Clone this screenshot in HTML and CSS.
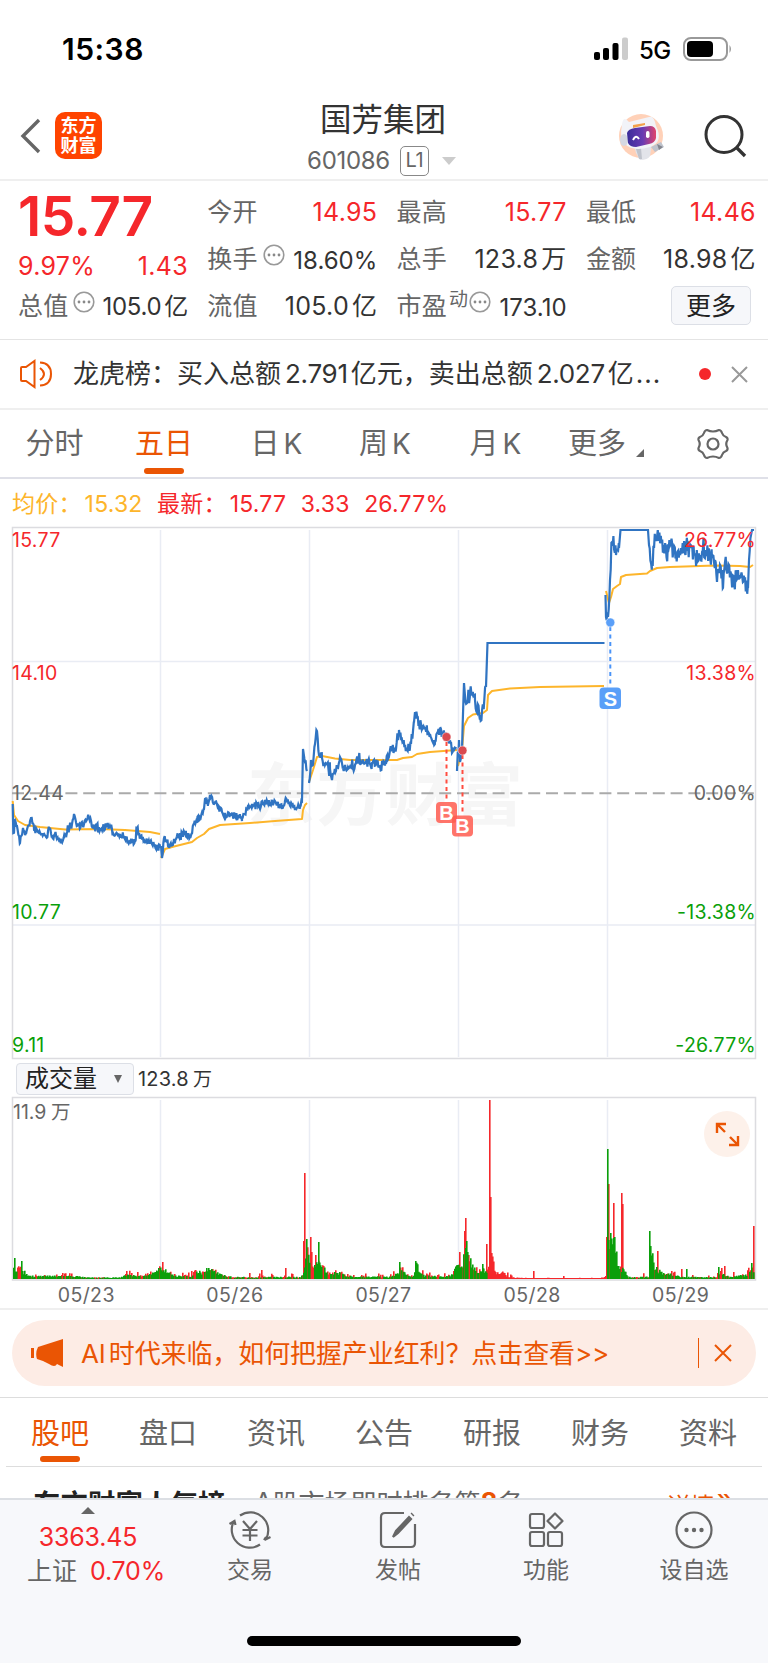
FILE: index.html
```
<!DOCTYPE html>
<html lang="zh-CN">
<head>
<meta charset="UTF-8">
<meta name="viewport" content="initial-scale=1, width=device-width">
<title>国芳集团 601086</title>
<link rel="stylesheet" href="styles.css">
</head>
<body>
<div class="statusbar">
	<span class="clock">15:38</span>
	<svg class="signal" width="34" height="24" viewBox="0 0 34 24">
		<rect x="0" y="15" width="6" height="8" rx="2"/><rect x="9" y="11" width="6" height="12" rx="2"/>
		<rect x="18.500" y="6" width="6" height="17" rx="2"/><rect x="28" y="0.500" width="6" height="22.500" rx="2" fill="#ccc"/>
	</svg>
	<span class="net">5G</span>
	<svg width="50" height="24" viewBox="0 0 50 24">
		<rect x="1" y="1" width="43" height="22" rx="7" fill="none" stroke="#999" stroke-width="2"/>
		<rect x="4" y="4" width="26" height="16" rx="4"/><path d="M46.500 8q3 4 0 8z" fill="#999"/>
	</svg>
</div>

<header>
	<svg class="back" width="22" height="36" viewBox="0 0 22 36"><path d="M19 2L3 18L19 34" fill="none" stroke="#666" stroke-width="3.400"/></svg>
	<div class="logo"><span>东方</span><span>财富</span></div>
	<div class="stock">
		<h1>国芳集团</h1>
		<p>601086<b>L1</b><i></i></p>
	</div>
	<svg class="robot" width="46" height="48" viewBox="0 0 46 48">
		<circle cx="22" cy="23" r="22" fill="#ffd1b8"/>
		<path d="M15 32L33 30L31 43Q29 47 21 47L17 40z" fill="#e2e4ea"/>
		<path d="M17 36l5-1 1 11-3 0zM32 34l10-5 3 5-9 5z" fill="#bfc3cc"/><path d="M38 31l6 3-4 3z" fill="#83868f"/>
		<path d="M3 12Q4 2 10 9L30 4Q35 2 37 13Q45 29 31 34Q14 39 6 31Q0 25 3 12z" fill="#f2f3f8"/>
		<ellipse cx="5" cy="27" rx="4" ry="6" fill="#d5d8e2"/>
		<path d="M14 12l12-2v2l-12 3z" fill="#f2a04b"/>
		<path d="M8 20Q9 16 16 15L31 13Q36 13 37 18L37 25Q36 30 30 31L17 34Q11 34 9 30z" fill="url(#face)"/>
		<path d="M14 27q3-6 6-1" fill="none" stroke="#fff" stroke-width="2"/><rect x="27" y="18" width="3.500" height="7" rx="1.700" fill="#fff"/>
		<defs><linearGradient id="face"><stop offset="0" stop-color="#3a2c99"/><stop offset=".55" stop-color="#6a3bb3"/><stop offset="1" stop-color="#e0446c"/></linearGradient></defs>
	</svg>
	<svg class="search" width="44" height="44" viewBox="0 0 44 44"><circle cx="20" cy="20.500" r="18" fill="none" stroke="#333" stroke-width="3"/><path d="M32 33L41 42" stroke="#333" stroke-width="3.400"/></svg>
</header>

<section class="quote">
	<div class="col main">
		<div class="price">15.77</div>
		<div class="row red chg"><span>9.97%</span><span>1.43</span></div>
		<div class="row"><label>总值</label><svg class="tip"><use href="#tip"/></svg><span>105.0<em>亿</em></span></div>
	</div>
	<div class="col">
		<div class="row red"><label>今开</label><span>14.95</span></div>
		<div class="row"><label>换手</label><svg class="tip"><use href="#tip"/></svg><span class="low">18.60%</span></div>
		<div class="row"><label>流值</label><span class="wide">105.0<em>亿</em></span></div>
	</div>
	<div class="col">
		<div class="row red"><label>最高</label><span>15.77</span></div>
		<div class="row"><label>总手</label><span class="wide">123.8<em>万</em></span></div>
		<div class="row"><label>市盈<sup>动</sup></label><svg class="tip pe"><use href="#tip"/></svg><span class="low">173.10</span></div>
	</div>
	<div class="col">
		<div class="row red"><label>最低</label><span>14.46</span></div>
		<div class="row"><label>金额</label><span class="wide">18.98<em>亿</em></span></div>
		<div class="row"><button class="more">更多</button></div>
	</div>
</section>

<section class="notice">
	<svg width="34" height="30" viewBox="0 0 34 30" fill="none" stroke="#ea5504" stroke-width="2"><path d="M2 9Q2 8 3 8H7L15.500 2V28L7 22H3Q2 22 2 21zM21 9Q29 15 21 21M21 3.500Q32 4 32 15Q32 26 21 26.500"/></svg>
	<p>龙虎榜：买入总额<s>2.791</s>亿元，卖出总额<s>2.027</s>亿<s class="dots">...</s></p>
	<i class="dot"></i>
	<svg width="17" height="17" viewBox="0 0 17 17"><path d="M1 1L16 16M16 1L1 16" stroke="#999" stroke-width="2"/></svg>
</section>

<nav class="periods">
	<a>分时</a><a class="on">五日</a><a>日<s>K</s></a><a>周<s>K</s></a><a>月<s>K</s></a><a class="sub">更多<i></i></a>
	<a><svg width="34" height="32" viewBox="0 0 34 32" fill="none" stroke="#666" stroke-width="2.200" stroke-linejoin="round"><path d="M11 2Q17 5 23 2Q25 2 26 5Q27 8 30 9Q32 10 31.500 12Q29 16 31.500 20Q32 22 30 23Q27 24 26 27Q25 30 23 30Q17 27 11 30Q9 30 8 27Q7 24 4 23Q2 22 2.500 20Q5 16 2.500 12Q2 10 4 9Q7 8 8 5Q9 2 11 2z"/><circle cx="17" cy="16" r="5.500"/></svg></a>
</nav>

<p class="legend"><span class="avg">均价：<s>15.32</s></span><span>最新：<s>15.77</s></span><span>3.33</span><span>26.77%</span></p>

<svg class="chart" id="id_price" width="768" height="535" viewBox="0 526 768 535">
	<text class="mark" x="247" y="820" textLength="276">东方财富</text>
	<path class="grid" d="M160.500 530V1057M309.500 530V1057M458.500 530V1057M607.500 530V1057M13 661.500H755M13 925H755"/>
	<path class="frame" d="M12.500 1058.500V527.500H755.500V1058.500z"/>
	<path d="M12 793.300H755" stroke="#aaa" stroke-width="2" stroke-dasharray="12 5.800"/>
	<g id="id_avg"></g><g id="id_line"></g>
	<g class="lbl red"><text x="12" y="547">15.77</text><text x="12" y="679.500">14.10</text><text class="r" x="756" y="547">26.77%</text><text class="r" x="756" y="679.500">13.38%</text></g>
	<g class="lbl gray"><text x="12" y="799.500">12.44</text><text class="r" x="756" y="799.500">0.00%</text></g>
	<g class="lbl green"><text x="12" y="919">10.77</text><text x="12" y="1051.500">9.11</text><text class="r" x="756" y="919">-13.38%</text><text class="r" x="756" y="1051.500">-26.77%</text></g>
	<g class="trade buy">
		<path d="M446.500 742V802M462.500 755V815"/><circle cx="446.500" cy="737" r="4.500"/><circle cx="462.500" cy="750.500" r="4.500"/>
		<rect x="436" y="802" width="21" height="21" rx="4"/><text x="446.500" y="819.500">B</text>
		<rect x="452" y="815.500" width="21" height="21" rx="4"/><text x="462.500" y="833">B</text>
	</g>
	<g class="trade sell"><path d="M610.300 627V687"/><circle cx="610.300" cy="622.500" r="4.500"/><rect x="599.500" y="687.500" width="21.500" height="21.500" rx="4"/><text x="610.300" y="705.500">S</text></g>
</svg>

<div class="volhead"><button><span>成交量</span><i></i></button><span>123.8<em>万</em></span></div>

<div class="volume">
	<svg class="chart" width="768" height="185" viewBox="0 1096 768 185">
		<path class="grid" d="M160.500 1100V1279M309.500 1100V1279M458.500 1100V1279M607.500 1100V1279"/>
		<path class="frame" d="M12.500 1280V1097.500H755.500V1280z"/>
		<path id="id_up" fill="#f5272b"/><path id="id_down" fill="#0a9f0a"/>
		<text class="cap" x="13" y="1119">11.9</text><text class="cap" x="51" y="1119">万</text>
	</svg>
	<svg class="expand" width="46" height="46" viewBox="0 0 46 46"><circle cx="23" cy="23" r="23" fill="#fdf1ea"/><path d="M13 22V13H22M13.500 13.500L21 21M34 25V34H25M33.500 33.500L26 26" fill="none" stroke="#ea5504" stroke-width="2.400"/></svg>
	<div class="dates"><span>05/23</span><span>05/26</span><span>05/27</span><span>05/28</span><span>05/29</span></div>
</div>

<section class="promo">
	<div>
		<svg width="32" height="28" viewBox="0 0 32 28" fill="#ea5504"><path d="M0 9h3v10H0zM7 8L32 0V28L26 25Q24 29 18 25L12 22L6 20Q4 14 7 8z"/></svg>
		<p><s>AI</s>时代来临，如何把握产业红利？点击查看&gt;&gt;</p>
		<i></i>
		<svg width="18" height="18" viewBox="0 0 18 18"><path d="M1 1L17 17M17 1L1 17" stroke="#ea5504" stroke-width="2"/></svg>
	</div>
</section>

<nav class="tabs"><a class="on">股吧</a><a>盘口</a><a>资讯</a><a>公告</a><a>研报</a><a>财务</a><a>资料</a></nav>
<div class="rank"><b>东方财富人气榜</b><span><s>A</s>股市场即时排名第<strong>8</strong>名</span><a>详情<s>»</s></a></div>

<footer>
	<div class="bar">
		<div class="index"><i></i><b>3363.45</b><p>上证<b>0.70%</b></p></div>
		<div><svg width="44" height="40" viewBox="0 0 44 40"><path d="M12 5.500A18 18 0 0 1 38 29M32 34.500A18 18 0 0 1 6 11M1.500 14L6.500 11L7.500 15M36 30L38 27M36.500 30L42.500 27"/><path d="M15 11L22 19L29 11M22 19V31M14.500 20H29.500M14.500 25.500H29.500"/></svg><span>交易</span></div>
		<div><svg width="40" height="40" viewBox="0 0 40 40"><path d="M26 3H7Q3 3 3 7V33Q3 37 7 37H33Q37 37 37 33V14"/><path d="M15 27L18 21L31 7L33 9L20 23z" fill="#666"/><path d="M34 5L35 4" stroke-width="4"/></svg><span>发帖</span></div>
		<div><svg width="40" height="40" viewBox="0 0 40 40"><rect x="4" y="4" width="14" height="14" rx="2"/><rect x="4" y="22" width="14" height="14" rx="2"/><rect x="22" y="22" width="14" height="14" rx="2"/><path d="M29 3.500L36.500 11L29 18.500L21.500 11z" stroke-linejoin="round"/></svg><span>功能</span></div>
		<div><svg width="40" height="40" viewBox="0 0 40 40"><circle cx="20" cy="20" r="17.500"/><g fill="#666" stroke="none"><circle cx="12.500" cy="20" r="2.200"/><circle cx="20" cy="20" r="2.200"/><circle cx="27.500" cy="20" r="2.200"/></g></svg><span>设自选</span></div>
	</div>
	<div class="home"></div>
</footer>

<svg width="0" height="0" class="defs"><symbol id="tip" viewBox="0 0 22 22"><circle cx="11" cy="11" r="9.800" fill="none" stroke="#999" stroke-width="1.600"/><g fill="#888"><circle cx="6" cy="11" r="1.400"/><circle cx="11" cy="11" r="1.400"/><circle cx="16" cy="11" r="1.400"/></g></symbol></svg>
<script src="app.js"></script>
</body>
</html>
```
FILE: styles.css
```
html, body {margin:0; padding:0; background:#fff; color:#333; font-family:Inter, "Noto Sans CJK SC", sans-serif;}
body {width:768px; height:1663px; overflow:hidden; display:flex; flex-direction:column;}
* {box-sizing:border-box;}
body > * {flex:none;}
p, h1 {margin:0; font-weight:normal;}
em, i {font-style:normal;}
s {text-decoration:none;}
svg {display:block; flex:none;}
.red {color:#f5272b;}
.defs {position:absolute;}

.statusbar {height:98px; padding:0 35px 0 62px; display:flex; align-items:center; color:#000;}
.clock {flex:auto; font-size:30px; font-weight:600; letter-spacing:0.5px;}
.net {width:31px; margin:2px 13px 0 11px; font-size:24px; font-weight:500; letter-spacing:-0.5px;}

header {height:83px; padding:0 20px; display:flex; border-bottom:2px solid #efefef;}
.back {margin-top:20px;}
.logo {width:47px; height:47px; margin:14px 0 0 13px; padding-top:4px; border-radius:10px; background:#ff4400; color:#fff; font-size:18px; font-weight:bold; line-height:19.500px; text-align:center;}
.logo span {display:block;}
.stock {flex:auto; padding-left:45px; text-align:center;}
.stock h1 {height:44px; font-size:31.500px; line-height:44px;}
.stock p {display:flex; justify-content:center; align-items:center; padding-right:3px; height:37px; color:#666; font-size:24px; line-height:37px; letter-spacing:-0.3px;}
.stock b {width:29px; height:30px; margin-left:10px; border:1.500px solid #888; border-radius:5px; font-size:20px; font-weight:normal; line-height:27px;}
.stock i {margin-left:13px; border:solid transparent; border-width:8px 7px 0; border-top-color:#ccc;}
.robot {margin:15px 39px 0 0;}
.search {margin-top:16px;}

.quote {height:159px; padding:8px 12px 0 18px; display:grid; grid-template-columns:repeat(4, 170px); gap:19.300px; border-bottom:1px solid #e4e4e4;}
.row {height:47px; display:flex; align-items:center; justify-content:space-between; font-size:25px; line-height:47px; letter-spacing:0.3px; white-space:nowrap;}
.row label {color:#666; letter-spacing:0.2px;}
.row span:last-child {margin-left:auto;}
.row em {margin-left:3px;}
.row .low {padding-top:2px; font-size:24px; letter-spacing:0;}
.main .row:last-child span {font-size:24px; letter-spacing:-0.3px;}
.main .row.chg {padding-top:13px;}
.price {height:47px; color:#f5272b; font-size:55px; font-weight:600; line-height:54px; letter-spacing:-0.5px;}
.tip {width:22px; height:22px; margin:-10px 0 0 5px;}
.tip.pe {margin-left:1px;}
sup {font-size:19px; line-height:0; vertical-align:9px; margin-left:2px;}
.more {width:80px; height:39px; margin:-2px 5px 0 auto; padding:0; border:1.500px solid #dcdfe6; border-radius:5px; background:#f6f7fa; color:#222; font:25px/32px Inter, "Noto Sans CJK SC", sans-serif;}

.notice {height:70px; padding:0 20px 0 19px; display:flex; align-items:center; border-bottom:2px solid #efefef;}
.notice p {width:601px; margin:-5px 0 0 20px; font-size:26px; white-space:nowrap;}
.notice s {font-size:26px; margin:0 3px 0 4px; letter-spacing:-0.3px;}
.notice s.dots {letter-spacing:1px; margin-left:2px;}
.dot {width:12px; height:12px; margin:0 20px 0 26px; border-radius:50%; background:#f5272b;}

.periods {height:69px; display:grid; grid-template-columns:109px 110px 115px 102px 119px 106px 107px; border-bottom:2px solid #dfe0e8;}
.periods a {position:relative; text-align:center; color:#666; font-size:29px; line-height:68px; white-space:nowrap;}
.periods s {margin-left:4px; font-size:28px;}
.periods svg {margin:18px auto 0 35px;}
.periods a.sub {text-align:left; padding-left:13px;}
.sub i {display:inline-block; margin-left:10px; border:solid transparent; border-width:0 0 8px 8px; border-bottom-color:#666; vertical-align:-3px;}
nav a.on {color:#ea5504;}
nav a.on::after {content:""; position:absolute; left:50%; bottom:4px; width:40px; height:6px; margin-left:-20px; border-radius:3px; background:#ea5504;}

.legend {height:47px; padding:0 12px; display:flex; gap:14.500px; color:#f5272b; font-size:23px; line-height:50px; letter-spacing:0.2px;}
.legend s {margin-left:3px;}
.avg {color:#fdb52b;}

.chart .grid {fill:none; stroke:#e9ecf4; stroke-width:1.500;}
.chart .frame {fill:none; stroke:#dcdce0; stroke-width:1.500;}
.chart .mark {font-size:68px; font-weight:bold; fill:#f6f6f6;}
.lbl text {font-size:19.500px; letter-spacing:0.3px;}
.lbl .r {text-anchor:end;}
.lbl.red {fill:#f5272b;}
.lbl.gray {fill:#666;}
.lbl.green {fill:#0a9f0a;}
#id_avg path {fill:none; stroke:#fdb52b; stroke-width:2; stroke-linejoin:round;}
#id_line path {fill:none; stroke:#3074c2; stroke-width:2.200;}
.trade path {stroke-width:2; stroke-dasharray:4 3.500;}
.trade circle {stroke:#fff; stroke-width:0.500;}
.trade text {fill:#fff; font:bold 20px "Liberation Sans", sans-serif; text-anchor:middle;}
.buy path {stroke:#ff4d40;}
.buy circle {fill:#d94a50;}
.buy rect {fill:#ff5c50; opacity:0.850;}
.sell path {stroke:#4a94f8;}
.sell circle, .sell rect {fill:#5a9ff8;}

.volhead {height:35px; padding:0 16px; display:flex; align-items:center; font-size:20px;}
.volhead button {width:118px; height:32px; padding:0 8px; display:flex; align-items:center; border:1.500px solid #dcdfe6; border-radius:4px; background:#f6f7fa; color:#222; font:24px/26px "Noto Sans CJK SC", sans-serif; white-space:nowrap;}
.volhead button span {margin:-3px 0 0;}
.volhead button i {margin-left:17px; border:solid transparent; border-width:8px 4.500px 0; border-top-color:#666;}
.volhead > span {margin:-2px 0 0 4px; letter-spacing:0.2px;}
.volhead em {margin-left:4px; font-size:19px;}
.volume {position:relative; height:214px; border-bottom:2px solid #efefef;}
.cap {font-size:19.500px; fill:#666;}
.expand {position:absolute; right:18px; top:15px;}
.dates {display:flex; padding:0 13px 0 12px; color:#666; font-size:19.500px; line-height:29px; letter-spacing:0.4px;}
.dates span {flex:1; text-align:center;}

.promo {height:88px; padding:10px 12px 0; border-bottom:1px solid #ddd;}
.promo div {height:66px; padding:0 24px 0 19px; display:flex; align-items:center; border-radius:33px; background:#fdece5; color:#ea5504;}
.promo p {flex:auto; margin:-3px 0 0 18px; font-size:26px; white-space:nowrap; letter-spacing:-0.1px;}
.promo s {margin-right:3px;}
.promo i {width:1.500px; height:30px; margin-right:15px; background:#ea5504;}

.tabs {height:69px; margin:0 6px; display:flex; border-bottom:1px solid #ddd;}
.tabs a {position:relative; flex:1; text-align:center; color:#666; font-size:29px; line-height:71px;}
.tabs a.on::after {bottom:4px;}
.rank {height:31px; padding:17px 34px 0 33px; display:flex; overflow:hidden; font-size:26px; line-height:40px; white-space:nowrap; color:#666;}
.rank > b {font-size:27.500px; color:#222;}
.rank span {margin-left:29px;}
.rank span s, .rank strong {position:relative; top:-2px;}
.rank strong, .rank a {color:#ea5504;}
.rank a {margin-left:auto; font-size:24px;}
.rank a s {position:relative; top:-5px; margin-left:2px; font-size:30px;}

footer {flex:auto; border-top:2px solid #dcdfe4; background:#f7f8fb;}
.bar {height:136px; display:grid; grid-template-columns:176px repeat(4, 148px); color:#666; font-size:23px;}
.bar > div {display:flex; flex-direction:column; align-items:center; padding-top:10px; line-height:38px;}
.bar svg {fill:none; stroke:#666; stroke-width:2.200;}
.bar span {margin-top:1px;}
.bar .index {padding-top:7px; font-size:25px; line-height:34px;}
.index > i {border:solid transparent; border-width:0 7px 7px; border-bottom-color:#666;}
.index b {color:#f5272b; font-weight:normal; letter-spacing:-0.2px;}
.index > b {margin-top:6px;}
.index p {padding-left:16px;}
.index p b {margin-left:13px;}
.home {width:274px; height:10px; margin:0 auto; border-radius:5px; background:#000;}
```
FILE: app.js
```
// intraday paths, one list of "x,y" per session
const price = [
	'12.7,804 13.3,833 15,820 17,826 20,843 23,828 26,834 30,821 31,818 34,829 38,832 42,834 46,837 49,829 52,835 58,840 65,836 68,828 72,824 74,814 77,826 84,824 89,817 94,828 100,830 107,825 113,833 120,834 124,836 128,842 135,842 137,828 140,838 146,841 152,844 157,847 160,848',
	'161,846 162,858 164,838 168,846 172,843 178,838 183,834 190,836 194,824 200,817 204,809 205,799 208,805 210,795 214,804 218,805 222,812 226,817 230,814 235,816 242,818 248,808 252,804 258,806 266,803 273,802 282,808 285,801 292,805 300,807 302,801 303,749 305,762 307,771',
	'309,783 311,760 313,765 315,744 317,731 319,755 322,758 325,765 330,769 332,780 336,771 340,757 343,768 348,767 353,768 360,760 366,764 372,763 380,766 386,764 390,750 396,749 399,730 403,742 407,750 411,744 414,722 415,712 419,724 424,727 430,734 435,742 441,729 446,737 451,742 452,753 456,747',
	'457,771 459,740 460,762 462,750 464,683 467,703 470,693 475,700 480,715 483,705 486,687 487.500,643 604.500,643',
	'605.500,595 606,617 608,617 610,580 612,542 616,555 619,548 620.500,530 648,530 649,545 652,563 655,539 658,533 663,545 668,552 672,542 676,553 682,552 688,545 694,553 700,555 706,550 712,558 715,560 717,582 720,565 723,588 725,562 730,572 735,585 738,570 743,582 748,588 749,560 751,535 752,530 754,530'
];
const avg = [
	'12.7,801 14,815 18,821 25,825 40,827 65,829.5 100,829 125,830 150,832 160,834',
	'161,858 165,849 172,847 180,845 192,842 197,838 204,834 209,829 220,825 250,823 275,821 302,819 303,810 305,805 307,803',
	'309,782 313,770 317,757 322,756 335,758.5 350,760 370,760 397,760 403,758 412,757 417,754 430,752 457,750',
	'458,766 462,750 464,726 468,718 473,714.5 483,713 487,710 488,695 492,691 510,688.5 540,687 604,686',
	'606,591 609,603 611,597 613,589 617,586 620,584 621,577 626,575 647,573.5 650,571 657,568 670,567 715,565.5 740,566 750,567 753,565'
];
// noise height for each session
const noise = [7, 7, 10, 17, 17];

let seed = 7;
function rnd() {
	seed = (seed * 16807) % 2147483647;
	return seed / 2147483647;
}
const parse = s => s.split(' ').map(p => p.split(',').map(Number));

function addPath(id, d) {
	const p = document.createElementNS('http://www.w3.org/2000/svg', 'path');
	p.setAttribute('d', d);
	document.getElementById(id).appendChild(p);
}

// fill the space between key points with tick noise
price.forEach((s, day) => {
	const pts = parse(s);
	let d = 'M' + pts[0];
	for (let i = 1; i < pts.length; i++) {
		const [x0, y0] = pts[i - 1], [x1, y1] = pts[i];
		const flat = x1 - x0 > 20;
		for (let x = x0 + 0.7; x < x1 && !flat && x1 - x0 > 1.6; x += 0.7) {
			const amp = noise[day] * (rnd() < 0.12 ? 1.7 : 1);
			const y = y0 + (y1 - y0) * (x - x0) / (x1 - x0) + (rnd() - 0.5) * amp;
			d += 'L' + x.toFixed(1) + ',' + Math.max(530, y).toFixed(1);
		}
		d += 'L' + x1 + ',' + y1;
	}
	addPath('id_line', d);
});
avg.forEach(s => addPath('id_avg', 'M' + s.replace(/ /g, 'L')));

// volume envelope, then the single bars that stick out
const base = parse('13,14 19,9 24,7 28,3 60,3 75,3 85,1.5 120,1.5 128,6 134,3 146,3 152,8 159,11 163,10 170,5 176,3 190,3 196,9 202,5 208,10 214,8 222,4 232,2 300,2 303,6 306,36 309,17 313,15 317,16 323,12 328,5 334,6 340,7 346,3 388,2 392,4 398,6 401,12 405,4 412,2 416,16 420,5 426,3 450,3 454,11 458,15 462,12 465,38 470,20 474,11 480,8 488,10 492,20 495,5 503,3 520,1 600,1 606,2 608,40 614,40 618,15 623,9 628,2 648,2 651,30 653,14 660,7 672,5 680,2 716,2 720,8 724,5 728,2 745,4 750,9 755,12');
const spikes = parse('14,21,1 21,18,1 125,5,0 162,17,0 206,11,1 212,10,0 261,9,0 285,11,0 303,38,0 304,106,0 306,40,1 310,42,0 311,27,0 315,24,0 318,37,1 399,17,1 415,18,1 459,27,0 464,48,0 465,61,0 466,38,1 482,15,1 486,35,0 489,179,0 490,82,0 491,26,0 533,8,0 563,3,0 606,42,0 607,130,1 608,95,0 610,46,1 613,76,0 614,42,1 621,86,0 622,75,0 649,48,1 650,33,1 657,28,0 681,10,0 686,10,1 718,12,1 724,13,0 751,16,1 753,53,0');
let up = '', down = '', k = 0;
const bar = (x, h) => 'M' + x + ',1279v' + -h.toFixed(1) + 'h1.6v' + h.toFixed(1) + 'z';
for (let x = 13; x < 754; x++) {
	while (base[k + 1] && base[k + 1][0] < x) k++;
	const [x0, h0] = base[k], [x1, h1] = base[k + 1] || base[k];
	const h = Math.max(1, (h0 + (h1 - h0) * (x - x0) / (x1 - x0 || 1)) * (0.6 + rnd() * 0.6));
	const red = x > 487 && x < 607 ? 1 : 0.3;
	if (rnd() < red) up += bar(x, h + (h > 2 ? rnd() * 4 : 0)); else down += bar(x, h);
}
spikes.forEach(([x, h, green]) => { if (green) down += bar(x, h); else up += bar(x, h); });
document.getElementById('id_up').setAttribute('d', up);
document.getElementById('id_down').setAttribute('d', down);
```
